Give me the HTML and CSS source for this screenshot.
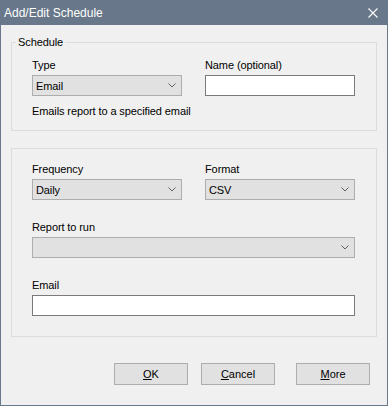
FILE: index.html
```html
<!DOCTYPE html>
<html lang="en">
<head>
    <meta charset="UTF-8">
    <meta name="viewport" content="width=device-width, initial-scale=1.0">
    <title>Add/Edit Schedule</title>
    <link rel="stylesheet" href="styles.css">
</head>
<body>

<div class="dialog">
    <div class="titlebar">
        <span class="title">Add/Edit Schedule</span>
        <svg class="close" width="10" height="10" viewBox="0 0 10 10">
            <path d="M0.5 0.5 L9.5 9.5 M9.5 0.5 L0.5 9.5" stroke="#fff" stroke-width="1.1" fill="none"/>
        </svg>
    </div>

    <div class="group">
        <div class="group-title">Schedule</div>
        <div class="grid">
            <div class="field">
                <label>Type</label>
                <div class="combo">
                    <span>Email</span>
                    <svg class="chevron" width="8" height="5" viewBox="0 0 8 5"><path d="M0.5 0.5 L4 4 L7.5 0.5" stroke="#606060" fill="none"/></svg>
                </div>
            </div>
            <div class="field">
                <label>Name (optional)</label>
                <input type="text" class="text-input">
            </div>
        </div>
        <p class="hint">Emails report to a specified email</p>
    </div>

    <div class="group group-options">
        <div class="grid">
            <div class="field">
                <label>Frequency</label>
                <div class="combo">
                    <span>Daily</span>
                    <svg class="chevron" width="8" height="5" viewBox="0 0 8 5"><path d="M0.5 0.5 L4 4 L7.5 0.5" stroke="#606060" fill="none"/></svg>
                </div>
            </div>
            <div class="field">
                <label>Format</label>
                <div class="combo">
                    <span>CSV</span>
                    <svg class="chevron" width="8" height="5" viewBox="0 0 8 5"><path d="M0.5 0.5 L4 4 L7.5 0.5" stroke="#606060" fill="none"/></svg>
                </div>
            </div>
            <div class="field wide">
                <label>Report to run</label>
                <div class="combo">
                    <span></span>
                    <svg class="chevron" width="8" height="5" viewBox="0 0 8 5"><path d="M0.5 0.5 L4 4 L7.5 0.5" stroke="#606060" fill="none"/></svg>
                </div>
            </div>
            <div class="field wide">
                <label>Email</label>
                <input type="text" class="text-input">
            </div>
        </div>
    </div>

    <div class="buttons">
        <button class="btn"><u>O</u>K</button>
        <button class="btn"><u>C</u>ancel</button>
        <button class="btn btn-more"><u>M</u>ore</button>
    </div>
</div>

</body>
</html>
```

FILE: styles.css
```css
body {
    margin: 0;
    padding: 0;
    background: #f0f0f0;
    font-family: 'Liberation Sans', Arial, sans-serif;
    font-size: 11px;
    letter-spacing: -0.1px;
    color: #000;
}

.dialog {
    width: 388px;
    height: 406px;
    box-sizing: border-box;
    border: 1px solid #687789;
    background: #f0f0f0;
}

.titlebar {
    height: 24px;
    background: #687789;
    display: flex;
    align-items: center;
    justify-content: space-between;
    padding: 0 9px 0 3px;
}

.title {
    color: #fff;
    font-size: 12px;
    line-height: 16px;
    letter-spacing: 0;
}

.group {
    margin: 17px 10px 0;
    border: 1px solid #dcdcdc;
    padding: 0 20px 11px;
}

.group-title {
    width: fit-content;
    margin: -8px 0 0 -16px;
    padding: 0 2px;
    line-height: 14px;
    background: #f0f0f0;
}

.grid {
    display: grid;
    grid-template-columns: 150px 150px;
    column-gap: 23px;
    margin-top: 9px;
}

.field label {
    display: block;
    line-height: 15px;
    margin-bottom: 2px;
}

.field.wide {
    grid-column: 1 / 3;
}

.combo {
    height: 21px;
    box-sizing: border-box;
    background: #e1e1e1;
    border: 1px solid #adadad;
    display: flex;
    align-items: center;
    justify-content: space-between;
    padding: 0 5px 0 3px;
}

.chevron {
    display: block;
}

.text-input {
    display: block;
    width: 100%;
    height: 21px;
    box-sizing: border-box;
    margin: 0;
    border: 1px solid #7a7a7a;
    background: #fff;
    font: inherit;
}

.hint {
    margin: 8px 0 0;
    line-height: 15px;
}

.group-options {
    padding: 13px 20px 20px;
}

.group-options .grid {
    margin-top: 0;
    row-gap: 20px;
}

.buttons {
    display: flex;
    justify-content: flex-end;
    gap: 13px;
    margin-top: 26px;
    padding-right: 17px;
}

.btn {
    width: 74px;
    height: 22px;
    margin: 0;
    padding: 0;
    background: #e1e1e1;
    border: 1px solid #adadad;
    font: inherit;
    color: #000;
}

.btn-more {
    margin-left: 8px;
}
```
